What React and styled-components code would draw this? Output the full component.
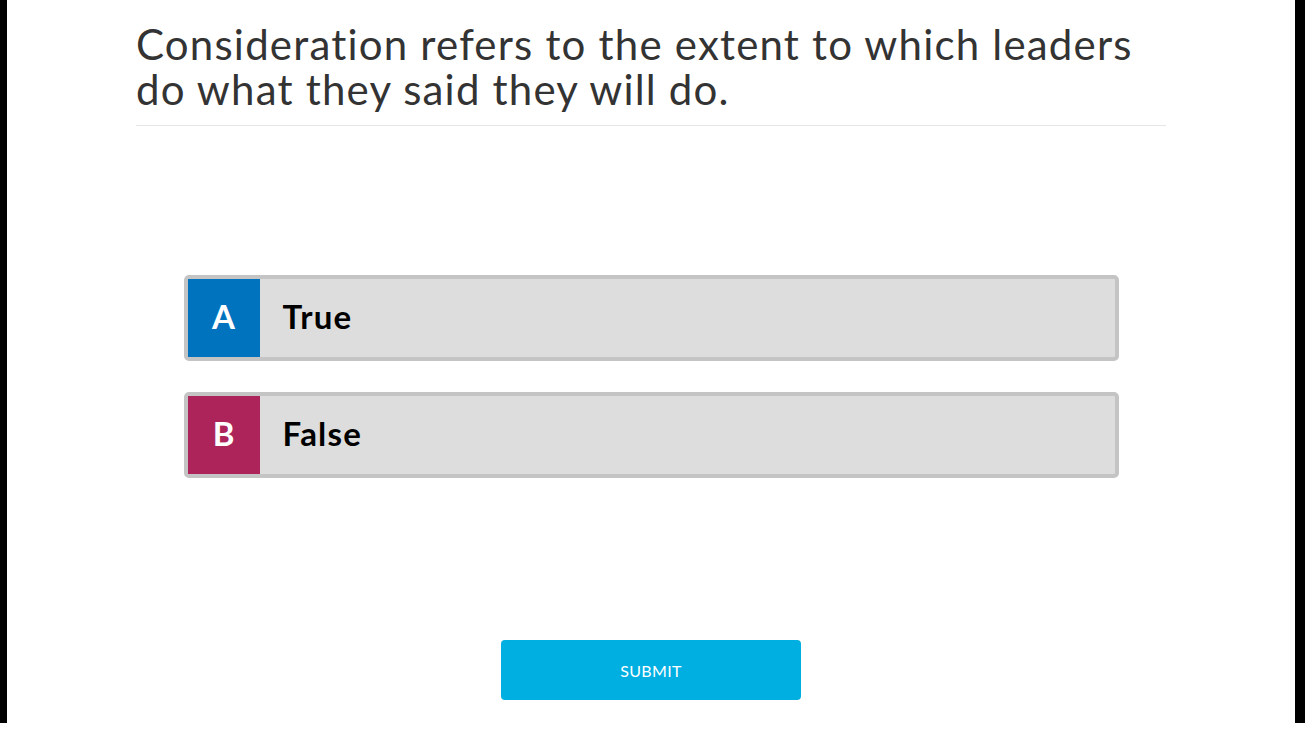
import React from "react";
import styled, { createGlobalStyle } from "styled-components";

const Global = createGlobalStyle`
  html, body { margin: 0; padding: 0; background: #ffffff; }
  body { font-family: "Lato", "Open Sans", "Liberation Sans", sans-serif; }
`;

const Frame = styled.div`
  height: 723px;
  background: #000000;
  display: flex;
  padding: 0 10px 0 7px;
`;

const Panel = styled.main`
  flex: 1;
  background: #ffffff;
  display: flex;
  flex-direction: column;
  align-items: center;
`;

const Question = styled.header`
  width: 1030px;
  padding-top: 22px;
  padding-bottom: 13px;
  border-bottom: 1px solid #e6e6e6;
`;

const Title = styled.h1`
  margin: 0;
  font-family: "Lato", sans-serif;
  font-weight: 400;
  font-size: 42px;
  line-height: 45px;
  color: #333333;
  letter-spacing: 1.2px;
`;

const Options = styled.div`
  margin-top: 149px;
  width: 935px;
  display: flex;
  flex-direction: column;
  gap: 31px;
`;

const Option = styled.button`
  display: flex;
  align-items: stretch;
  height: 86px;
  padding: 0;
  border: 4px solid #c4c4c4;
  border-radius: 5px;
  background: #dddddd;
  cursor: pointer;
  text-align: left;
  font-family: "Lato", sans-serif;
`;

const Letter = styled.span`
  width: 72px;
  padding-bottom: 4px;
  box-sizing: border-box;
  background: ${(p) => p.$color};
  color: #ffffff;
  font-size: 33px;
  font-weight: 700;
  display: flex;
  align-items: center;
  justify-content: center;
`;

const Label = styled.span`
  display: flex;
  align-items: center;
  padding-left: 23px;
  padding-bottom: 4px;
  font-size: 33px;
  font-weight: 700;
  letter-spacing: 1.2px;
  color: #000000;
`;

const Submit = styled.button`
  margin-top: 162px;
  width: 300px;
  height: 60px;
  border: none;
  border-radius: 4px;
  background: #00afe2;
  color: #ffffff;
  font-family: "Lato", sans-serif;
  font-size: 16px;
  font-weight: 400;
  letter-spacing: 0.3px;
  cursor: pointer;
`;

const options = [
  { key: "A", label: "True", color: "#0073bf" },
  { key: "B", label: "False", color: "#ac2459" },
];

export default function App() {
  return (
    <>
      <Global />
      <Frame>
        <Panel>
          <Question>
            <Title>
              Consideration refers to the extent to which leaders do what they
              said they will do.
            </Title>
          </Question>
          <Options>
            {options.map((o) => (
              <Option key={o.key}>
                <Letter $color={o.color}>{o.key}</Letter>
                <Label>{o.label}</Label>
              </Option>
            ))}
          </Options>
          <Submit>SUBMIT</Submit>
        </Panel>
      </Frame>
    </>
  );
}
